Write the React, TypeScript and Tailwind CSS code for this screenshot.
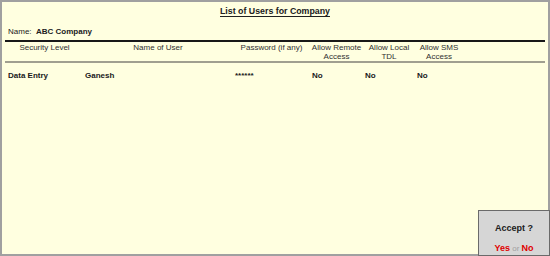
import React from "react";

const cols = [77, 150, 77, 53, 52, 48];

export default function App() {
  const headers: string[][] = [
    ["Security Level"],
    ["Name of User"],
    ["Password (if any)"],
    ["Allow Remote", "Access"],
    ["Allow Local", "TDL"],
    ["Allow SMS", "Access"],
  ];
  const data = ["Data Entry", "Ganesh", "******", "No", "No", "No"];
  return (
    <div
      className="relative w-[550px] h-[256px] bg-[#ffffe0] text-[#202020] overflow-hidden"
      style={{ fontFamily: "'Liberation Sans', Arial, sans-serif" }}
    >
      <div className="absolute inset-0 border-2 border-[#a0a0a0] pointer-events-none" />
      <div className="flex flex-col pt-[5px]">
        <div className="flex justify-center">
          <span className="text-[8.8px] font-bold underline underline-offset-[2px] leading-[12px]">
            List of Users for Company
          </span>
        </div>
        <div className="mt-[9px] pl-[8px] text-[8px] leading-[11px]">
          Name:&nbsp; <span className="font-bold">ABC Company</span>
        </div>
        <div className="mt-[3px] mx-[5px] w-[540px] h-[2px] bg-[#181818]" />
        <div className="flex pl-[8px] text-[8px] leading-[9px] text-[#303030]">
          {headers.map((h, i) => (
            <div key={i} style={{ width: cols[i] }} className="flex flex-col items-center pr-[4px] mt-[1px] whitespace-nowrap">
              {h.map((l, j) => (
                <span key={j}>{l}</span>
              ))}
            </div>
          ))}
        </div>
        <div className="mx-[5px] w-[540px] h-[2px] bg-[#a09f90]" />
        <div className="flex pl-[8px] mt-[8px] text-[8px] leading-[10px] font-bold">
          {data.map((d, i) => (
            <div key={i} style={{ width: cols[i] }}>
              {d}
            </div>
          ))}
        </div>
      </div>
      <div className="absolute left-[478px] top-[210px] w-[72px] h-[46px] bg-[#d6d6d6] border border-[#6a6a6a] flex flex-col items-center">
        <span className="mt-[12px] text-[9px] font-bold leading-[11px]">Accept ?</span>
        <span className="mt-[9px] text-[9px] font-bold leading-[11px]">
          <span className="text-[#e00000]">Yes</span>
          <span className="text-[#a0a0a0] font-normal text-[8px]"> or </span>
          <span className="text-[#e00000]">No</span>
        </span>
      </div>
    </div>
  );
}
